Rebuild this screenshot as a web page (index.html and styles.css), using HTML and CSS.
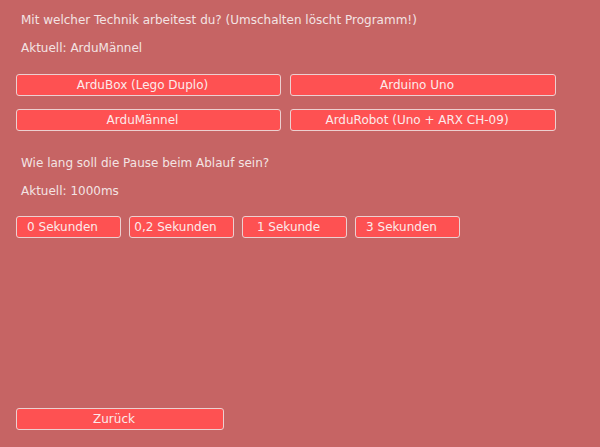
FILE: index.html
```html
<!DOCTYPE html>
<html lang="de">
<head>
    <meta charset="UTF-8">
    <title>Einstellungen</title>
    <link rel="stylesheet" href="styles.css">
</head>
<body>

    <div class="settings">
        <p class="label">Mit welcher Technik arbeitest du? (Umschalten löscht Programm!)</p>
        <p class="label">Aktuell: ArduMännel</p>

        <div class="tech-grid">
            <button class="btn">ArduBox (Lego Duplo)</button>
            <button class="btn">Arduino Uno</button>
            <button class="btn">ArduMännel</button>
            <button class="btn">ArduRobot (Uno + ARX CH-09)</button>
        </div>

        <p class="label section">Wie lang soll die Pause beim Ablauf sein?</p>
        <p class="label">Aktuell: 1000ms</p>

        <div class="pause-row">
            <button class="btn small">0 Sekunden</button>
            <button class="btn small">0,2 Sekunden</button>
            <button class="btn small">1 Sekunde</button>
            <button class="btn small">3 Sekunden</button>
        </div>

        <button class="btn back">Zurück</button>
    </div>

</body>
</html>
```

FILE: styles.css
```css
/* General */
body {
    margin: 0;
    background: #c66464;
    font-family: "DejaVu Sans", sans-serif;
    font-size: 12px;
}

.settings {
    display: flex;
    flex-direction: column;
    align-items: flex-start;
    height: 447px;
    box-sizing: border-box;
    padding: 6px 0 17px 16px;
}

.label {
    margin: 0;
    padding-left: 5px;
    line-height: 28px;
    color: #f3e3e3;
}

.label.section {
    margin-top: 18px;
}

/* Buttons */
.btn {
    height: 22px;
    box-sizing: border-box;
    padding: 0 12px 0 0;
    background: #fe5152;
    border: 1px solid #ecd0d0;
    border-radius: 3px;
    color: #fbeaea;
    font-family: inherit;
    font-size: 12px;
    text-align: center;
}

.tech-grid {
    display: grid;
    grid-template-columns: 265px 266px;
    column-gap: 9px;
    row-gap: 13px;
    margin-top: 12px;
}

.pause-row {
    display: flex;
    gap: 8px;
    margin-top: 11px;
}

.btn.small {
    width: 105px;
}

.btn.back {
    width: 208px;
    margin-top: auto;
}
```
